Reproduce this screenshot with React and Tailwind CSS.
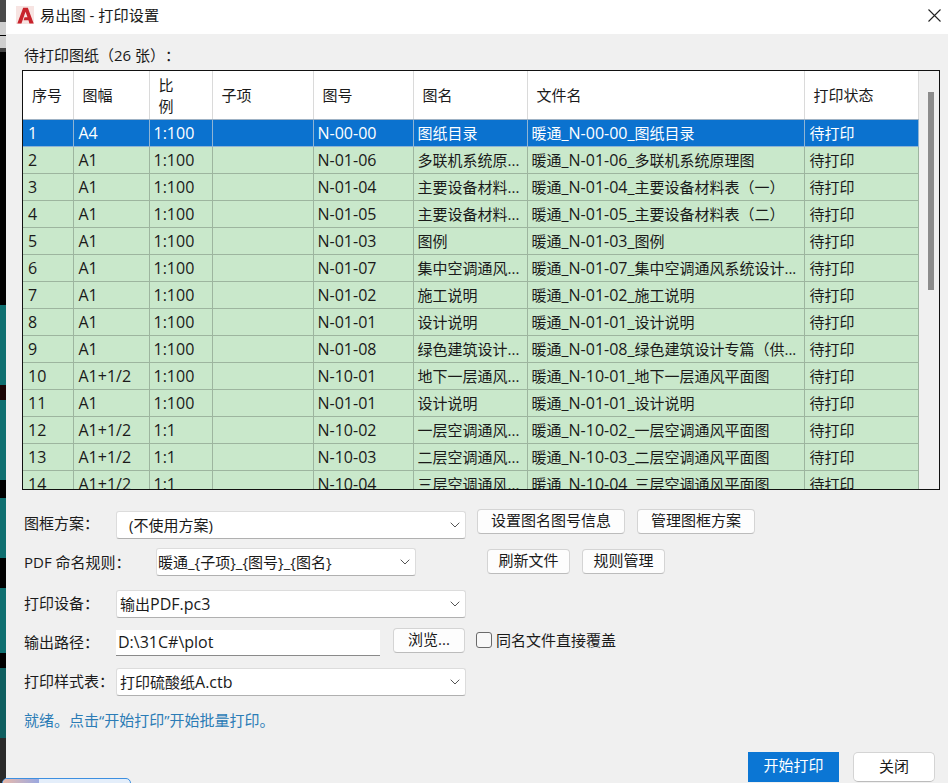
import React from 'react';

const font = "font-['Open_Sans','Noto_Sans_CJK_SC',sans-serif]";

const sheets = [
  ['1', 'A4', '1:100', 'N-00-00', '图纸目录', '图纸目录'],
  ['2', 'A1', '1:100', 'N-01-06', '多联机系统原...', '多联机系统原理图'],
  ['3', 'A1', '1:100', 'N-01-04', '主要设备材料...', '主要设备材料表（一）'],
  ['4', 'A1', '1:100', 'N-01-05', '主要设备材料...', '主要设备材料表（二）'],
  ['5', 'A1', '1:100', 'N-01-03', '图例', '图例'],
  ['6', 'A1', '1:100', 'N-01-07', '集中空调通风...', '集中空调通风系统设计...'],
  ['7', 'A1', '1:100', 'N-01-02', '施工说明', '施工说明'],
  ['8', 'A1', '1:100', 'N-01-01', '设计说明', '设计说明'],
  ['9', 'A1', '1:100', 'N-01-08', '绿色建筑设计...', '绿色建筑设计专篇（供...'],
  ['10', 'A1+1/2', '1:100', 'N-10-01', '地下一层通风...', '地下一层通风平面图'],
  ['11', 'A1', '1:100', 'N-01-01', '设计说明', '设计说明'],
  ['12', 'A1+1/2', '1:1', 'N-10-02', '一层空调通风...', '一层空调通风平面图'],
  ['13', 'A1+1/2', '1:1', 'N-10-03', '二层空调通风...', '二层空调通风平面图'],
  ['14', 'A1+1/2', '1:1', 'N-10-04', '三层空调通风...', '三层空调通风平面图'],
];

// desktop showing behind the dialog, top to bottom
const desktopStrip = [
  ['h-[22px]', 'bg-[#4a4a4a]'],
  ['h-[13px]', 'bg-[#cfcfcf]'],
  ['h-[1px]', 'bg-black'],
  ['h-[12px]', 'bg-[#cfcfcf]'],
  ['h-[4px]', 'bg-[#444]'],
  ['h-[253px]', 'bg-black'],
  ['h-[80px]', 'bg-[#0f6f70]'],
  ['h-[15px]', 'bg-[#1a0505]'],
  ['h-[80px]', 'bg-[#0f6f70]'],
  ['h-[18px]', 'bg-black'],
  ['h-[60px]', 'bg-[#0f6f70]'],
  ['h-[30px]', 'bg-black'],
  ['h-[65px]', 'bg-[#0f6f70]'],
  ['h-[15px]', 'bg-black'],
  ['h-[70px]', 'bg-[#0f5f60]'],
  ['h-[45px]', 'bg-[#2a2a2a]'],
];

function Chevron() {
  return (
    <svg width="10" height="6" viewBox="0 0 10 6" className="shrink-0">
      <path d="M0.7 0.7 L5 5 L9.3 0.7" fill="none" stroke="#555" strokeWidth="1" />
    </svg>
  );
}

function Select({ className, textClass, children }) {
  return (
    <div className={`flex items-center justify-between bg-white border border-[#dcdcdc] border-b-[#b0b0b0] rounded-[3px] pr-[5px] ${className}`}>
      <span className={`text-[15px] text-[#1a1a1a] whitespace-nowrap ${textClass}`}>{children}</span>
      <Chevron />
    </div>
  );
}

function Btn({ className, children }) {
  return (
    <div className={`flex items-center justify-center bg-[#fdfdfd] border border-[#d4d4d4] border-b-[#bcbcbc] rounded-[4px] pb-[2px] text-[15px] text-[#1a1a1a] whitespace-nowrap ${className}`}>
      {children}
    </div>
  );
}

function Label({ className, children }) {
  return <div className={`text-[15px] text-[#1a1a1a] whitespace-nowrap shrink-0 ${className}`}>{children}</div>;
}

function SheetTable() {
  const th = 'font-normal text-left text-[15px] text-[#1a1a1a] border-r border-[#dadada] border-b border-b-[#9fb2c4] pl-[9px] pt-[2px] leading-[21px]';
  return (
    <table className="table-fixed border-collapse w-[895px] shrink-0">
      <colgroup>
        <col className="w-[50px]" />
        <col className="w-[76px]" />
        <col className="w-[63px]" />
        <col className="w-[101px]" />
        <col className="w-[100px]" />
        <col className="w-[114px]" />
        <col className="w-[277px]" />
        <col className="w-[114px]" />
      </colgroup>
      <thead>
        <tr className="h-[48px] bg-white">
          <th className={th}>序号</th>
          <th className={th}>图幅</th>
          <th className={th}>比<br />例</th>
          <th className={th}>子项</th>
          <th className={th}>图号</th>
          <th className={th}>图名</th>
          <th className={th}>文件名</th>
          <th className={th}>打印状态</th>
        </tr>
      </thead>
      <tbody>
        {sheets.map((s, i) => {
          const selected = i === 0;
          const line = selected ? 'border-[#8fb4d4]' : 'border-[#9db59f]';
          const td = `pl-[4px] whitespace-nowrap overflow-hidden border-r border-b ${line}`;
          const tdWide = `pl-[5px] whitespace-nowrap overflow-hidden border-r border-b ${line}`;
          return (
            <tr key={s[0]} className={`h-[27px] text-[15px] leading-[20px] ${selected ? 'bg-[#0b72cf] text-white' : 'bg-[#c9e8cb] text-[#1a1a1a]'}`}>
              <td className={`${tdWide} text-[16px]`}>{s[0]}</td>
              <td className={`${tdWide} text-[16px]`}>{s[1]}</td>
              <td className={`${td} text-[16px]`}>{s[2]}</td>
              <td className={td}></td>
              <td className={`${td} text-[16px]`}>{s[3]}</td>
              <td className={td}>{s[4]}</td>
              <td className={td}>暖通<span className="text-[16px] leading-[16px]">_{s[3]}_</span>{s[5]}</td>
              <td className={tdWide}>待打印</td>
            </tr>
          );
        })}
      </tbody>
    </table>
  );
}

export default function App() {
  return (
    <div className={`relative flex w-[948px] h-[783px] overflow-hidden bg-black ${font}`}>
      <div className="w-[6px] shrink-0 flex flex-col">
        {desktopStrip.map(([h, c], i) => (
          <div key={i} className={`${h} ${c}`} />
        ))}
      </div>

      <div className="flex-1 flex flex-col min-w-0 bg-[#f0f0f0]">
        {/* title bar */}
        <div className="h-[34px] shrink-0 bg-white flex items-center pl-[10px] pr-[6px] pb-[4px]">
          <div className="w-[18px] h-[18px] bg-[#f7e4e2] flex items-center justify-center">
            <svg width="17" height="17" viewBox="0 0 16 16">
              <path d="M0.3 15.5 L5.8 0.8 H10.2 L15.7 15.5 H11.7 L10.8 12.4 H6.2 L7.1 9.7 H9.9 L8 4.4 L4.2 15.5 Z" fill="#c8232c" />
            </svg>
          </div>
          <span className="ml-[6px] text-[15.2px] text-[#1a1a1a]">易出图 - 打印设置</span>
          <svg width="13" height="13" viewBox="0 0 13 13" className="ml-auto mr-[1px]">
            <path d="M0.5 0.5 L12.5 12.5 M12.5 0.5 L0.5 12.5" stroke="#222" strokeWidth="1.1" />
          </svg>
        </div>

        <div className="flex-1 flex flex-col pl-[16px] pr-[8px]">
          <div className="h-[36px] flex items-end pl-[2px] pb-[5px] text-[15px] leading-[20px] text-[#1a1a1a] [text-spacing-trim:space-all]">待打印图纸（26 张）：</div>

          <div className="h-[420px] shrink-0 flex overflow-hidden border-t border-r-[1.5px] border-b border-l-[1.5px] border-[#111]">
            <SheetTable />
            <div className="flex-1 pl-[9px] pt-[21px]">
              <div className="w-[6px] h-[198px] bg-[#8c8c8c]" />
            </div>
          </div>

          {/* form */}
          <div className="pl-[2px] pt-[19px]">
            <div className="flex items-start h-[39px]">
              <Label className="w-[92px] leading-[29px]">图框方案：</Label>
              <Select className="w-[350px] h-[28px] mt-[2px]" textClass="pl-[12px]">(不使用方案)</Select>
              <Btn className="w-[148px] h-[25px] ml-[11px]">设置图名图号信息</Btn>
              <Btn className="w-[118px] h-[25px] ml-[12px]">管理图框方案</Btn>
            </div>
            <div className="flex items-start h-[42px]">
              <Label className="w-[132px] leading-[29px]">PDF 命名规则：</Label>
              <Select className="w-[260px] h-[28px] border-[#999] border-b-[#888]" textClass="pl-[1px]">暖通_{'{'}子项{'}'}_{'{'}图号{'}'}_{'{'}图名{'}'}</Select>
              <Btn className="w-[83px] h-[25px] ml-[71px] mt-[1px]">刷新文件</Btn>
              <Btn className="w-[83px] h-[25px] ml-[12px] mt-[1px]">规则管理</Btn>
            </div>
            <div className="flex items-start h-[39px]">
              <Label className="w-[92px] leading-[27px]">打印设备：</Label>
              <Select className="w-[350px] h-[28px]" textClass="pl-[3px]">输出<span className="text-[16px]">PDF.pc3</span></Select>
            </div>
            <div className="flex items-start h-[39px]">
              <Label className="w-[92px] leading-[27px]">输出路径：</Label>
              <div className="w-[264px] h-[26px] mt-[1px] bg-white border-b border-b-[#8a8a8a] pl-[2px] text-[16px] leading-[25px] text-[#1a1a1a]">D:\31C#\plot</div>
              <Btn className="w-[72px] h-[25px] ml-[13px] -mt-[1px]">浏览...</Btn>
              <div className="w-[16px] h-[16px] ml-[11px] mt-[3px] bg-[#f8f8f8] border border-[#6a6a6a] rounded-[3px]" />
              <span className="ml-[4px] mt-[-1px] text-[15px] text-[#1a1a1a] leading-[24px]">同名文件直接覆盖</span>
            </div>
            <div className="flex items-start h-[41px]">
              <Label className="w-[92px] leading-[27px]">打印样式表：</Label>
              <Select className="w-[350px] h-[28px]" textClass="pl-[3px]">打印硫酸纸<span className="text-[16px]">A.ctb</span></Select>
            </div>
            <div className="text-[15px] leading-[22px] text-[#2b7cb6]">就绪。点击“开始打印”开始批量打印。</div>
          </div>

          <div className="flex justify-end gap-[14px] mt-[21px] pr-[5px]">
            <div className="w-[91px] h-[30px] bg-[#0b76d4] pb-[3px] text-white text-[15px] flex items-center justify-center">开始打印</div>
            <Btn className="w-[82px] h-[30px] bg-white rounded-[5px]">关闭</Btn>
          </div>
        </div>
      </div>

      {/* taskbar button peeking in under the dialog */}
      <div className="absolute left-[2px] top-[778px] w-[129px] h-[10px] bg-[#e4eefa] border border-[#3d8fe0] rounded-t-[5px] overflow-hidden">
        <div className="w-[36px] h-[10px] bg-gradient-to-r from-[#e8b8a8] to-[#9aa8e0]" />
      </div>
    </div>
  );
}
